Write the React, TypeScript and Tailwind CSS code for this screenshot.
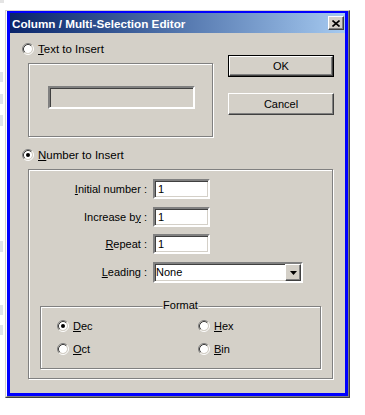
import React from "react";

const raised =
  "border border-t-white border-l-white border-r-[#404040] border-b-[#404040] shadow-[inset_-1px_-1px_0_#808080] bg-[#d4d0c8]";
const sunken =
  "border-2 border-t-[#808080] border-l-[#808080] border-r-white border-b-white shadow-[inset_1px_1px_0_#404040,inset_-1px_-1px_0_#d4d0c8]";
const etched = "border border-[#808080] shadow-[inset_1px_1px_0_#fff,1px_1px_0_#fff]";

function Radio({ checked }: { checked?: boolean }) {
  return (
    <svg width="12" height="12" viewBox="0 0 12 12" className="shrink-0">
      <circle cx="6" cy="6" r="4" fill="#fff" />
      <path d="M2.11 9.89A5.5 5.5 0 0 1 9.89 2.11" stroke="#808080" fill="none" />
      <path d="M9.89 2.11A5.5 5.5 0 0 1 2.11 9.89" stroke="#fff" fill="none" />
      <path d="M2.82 9.18A4.5 4.5 0 0 1 9.18 2.82" stroke="#404040" fill="none" />
      <path d="M9.18 2.82A4.5 4.5 0 0 1 2.82 9.18" stroke="#d4d0c8" fill="none" />
      {checked && <circle cx="6" cy="6" r="2" fill="#000" />}
    </svg>
  );
}

// Underlined accelerator key
const K = ({ children }: { children: React.ReactNode }) => (
  <span className="underline underline-offset-[1px] decoration-1">{children}</span>
);

function Field({ label, value, className }: { label: React.ReactNode; value: string; className?: string }) {
  return (
    <div className={`flex items-center h-[20px] ${className ?? ""}`}>
      <span className="w-[118px] text-right">{label}</span>
      <div className={`ml-[6px] w-[57px] h-[20px] bg-white flex items-center pl-[3px] ${sunken}`}>
        {value}
      </div>
    </div>
  );
}

function Option({ checked, children }: { checked?: boolean; children: React.ReactNode }) {
  return (
    <div className="flex items-center gap-[4px] h-[12px]">
      <Radio checked={checked} />
      <span>{children}</span>
    </div>
  );
}

const App = () => {
  return (
    <div className="w-[365px] h-[415px] bg-white flex text-[11px] leading-[13px] text-black font-['Liberation_Sans',Arial,sans-serif]">
      {/* bits of the page behind the dialog */}
      <div className="w-[5px] flex flex-col">
        <div className="h-[3px] w-[4px] bg-[#e4e4e4]" />
        <div className="mt-[69px] h-[10px] w-[4px] bg-[#dfe3e8] border-r border-white" />
        <div className="mt-[12px] h-[10px] w-[4px] bg-[#dfe3e8] border-r border-white" />
        <div className="mt-[11px] h-[11px] w-[4px] bg-[#dfe3e8] border-r border-white" />
        <div className="mt-[115px] h-[11px] w-[4px] bg-[#dfe3e8] border-r border-white" />
        <div className="mt-[53px] h-[10px] w-[4px] bg-[#dfe3e8] border-r border-white" />
        <div className="mt-[10px] h-[10px] w-[4px] bg-[#dfe3e8] border-r border-white" />
      </div>

      {/* Dialog window */}
      <div className="mt-[10px] w-[345px] h-[388px] border border-t-[#d4d0c8] border-l-[#d4d0c8] border-r-[#404040] border-b-[#404040]">
        <div className="h-full border-l border-r border-b border-l-white border-r-[#808080] border-b-[#808080]">
          <div className="h-full flex flex-col bg-[#d4d0c8] border-[#0000ff] border-t-2 border-x-[3px] border-b-[3px]">
            {/* Title bar */}
            <div className="h-[20px] shrink-0 flex items-center justify-between pl-[2px] pr-[1px] bg-linear-to-r from-[#0a246a] to-[#a6caf0]">
              <span className="text-white font-bold text-[11.7px]">Column / Multi-Selection Editor</span>
              <div className={`w-[16px] h-[14px] flex items-center justify-center ${raised}`}>
                <svg width="8" height="7" viewBox="0 0 8 7">
                  <path d="M0.5 0.5L7.5 6.5M7.5 0.5L0.5 6.5" stroke="#000" strokeWidth="1.6" />
                </svg>
              </div>
            </div>

            {/* Body */}
            <div className="pl-[12px] pt-[9px]">
              <div className="flex">
                <div className="w-[192px]">
                  <div className="flex items-center h-[14px] gap-[4px]">
                    <Radio />
                    <span className="text-[11.5px]">
                      <K>T</K>ext to Insert
                    </span>
                  </div>
                  <div className={`ml-[6px] mt-[7px] w-[185px] h-[74px] pl-[19px] pt-[22px] ${etched}`}>
                    <div className={`w-[147px] h-[23px] bg-[#d4d0c8] ${sunken}`} />
                  </div>
                </div>

                <div className="ml-[14px] pt-[13px] flex flex-col gap-[16px]">
                  <div className="w-[106px] h-[22px] border border-black">
                    <div className={`h-full flex items-center justify-center ${raised}`}>OK</div>
                  </div>
                  <div className={`w-[106px] h-[22px] flex items-center justify-center ${raised}`}>Cancel</div>
                </div>
              </div>

              <div className="mt-[11px] flex items-center h-[14px] gap-[4px]">
                <Radio checked />
                <span className="text-[11.5px]">
                  <K>N</K>umber to Insert
                </span>
              </div>

              <div className={`ml-[6px] mt-[7px] w-[305px] h-[210px] pt-[9px] ${etched}`}>
                <Field
                  label={
                    <>
                      <K>I</K>nitial number :
                    </>
                  }
                  value="1"
                />
                <Field
                  className="mt-[8px]"
                  label={
                    <>
                      Increase b<K>y</K> :
                    </>
                  }
                  value="1"
                />
                <Field
                  className="mt-[7px]"
                  label={
                    <>
                      <K>R</K>epeat :
                    </>
                  }
                  value="1"
                />
                <div className="mt-[8px] flex items-center h-[21px]">
                  <span className="w-[118px] text-right">
                    <K>L</K>eading :
                  </span>
                  <div className={`ml-[6px] w-[150px] h-[21px] bg-white flex items-center justify-between ${sunken}`}>
                    <span className="pl-[1px]">None</span>
                    <div className={`w-[16px] h-[17px] flex items-center justify-center ${raised}`}>
                      <svg width="7" height="4" viewBox="0 0 7 4">
                        <polygon points="0,0 7,0 3.5,4" fill="#000" />
                      </svg>
                    </div>
                  </div>
                </div>

                {/* Format group */}
                <div className={`relative ml-[11px] mt-[23px] w-[281px] h-[63px] ${etched}`}>
                  <span className="absolute -top-[8px] left-1/2 -translate-x-1/2 bg-[#d4d0c8] px-[1px]">Format</span>
                  <div className="pl-[16px] pt-[13px] grid grid-cols-[141px_1fr] gap-y-[11px]">
                    <Option checked>
                      <K>D</K>ec
                    </Option>
                    <Option>
                      <K>H</K>ex
                    </Option>
                    <Option>
                      <K>O</K>ct
                    </Option>
                    <Option>
                      <K>B</K>in
                    </Option>
                  </div>
                </div>
              </div>
            </div>
          </div>
        </div>
      </div>
    </div>
  );
};

export default App;
